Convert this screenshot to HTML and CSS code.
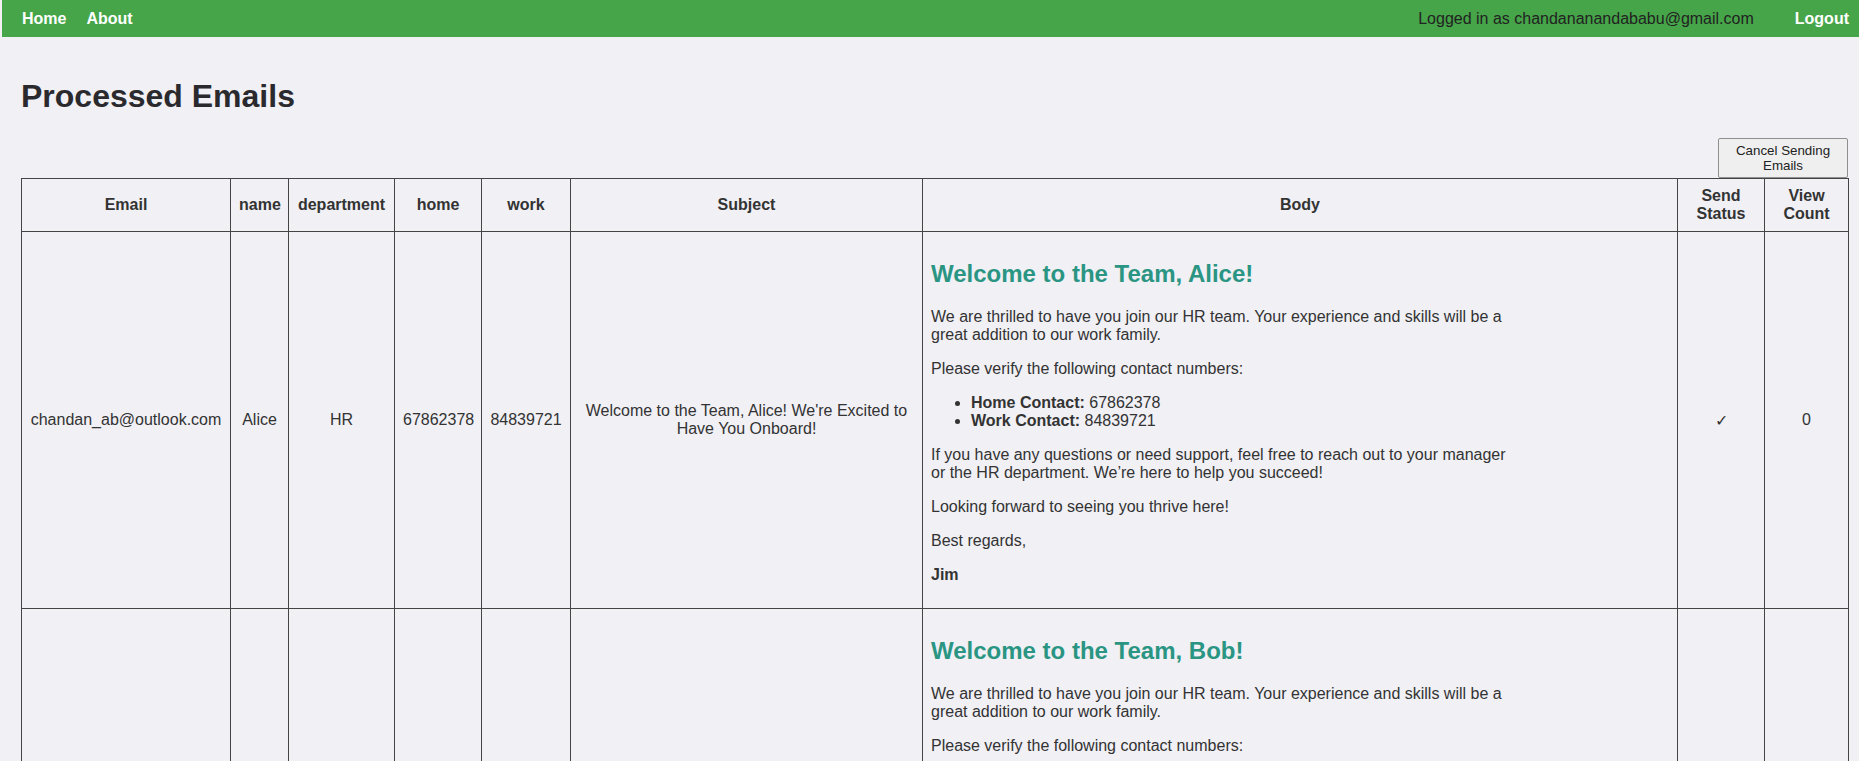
FILE: index.html
```html
<!DOCTYPE html>
<html lang="en">
<head>
<meta charset="utf-8">
<title>Processed Emails</title>
<link rel="stylesheet" href="styles.css">
</head>
<body>
<nav class="topnav">
  <div class="nav-left">
    <a class="nav-link" href="#">Home</a>
    <a class="nav-link" href="#">About</a>
  </div>
  <div class="nav-right">
    <span class="nav-user">Logged in as chandananandababu@gmail.com</span>
    <a class="nav-link" href="#">Logout</a>
  </div>
</nav>
<main class="page">
  <h1 class="title">Processed Emails</h1>
  <div class="actions">
    <button class="cancel-btn" type="button">Cancel Sending Emails</button>
  </div>
  <table class="emails">
    <colgroup>
      <col class="c-email"><col class="c-name"><col class="c-dept"><col class="c-home"><col class="c-work"><col class="c-subject"><col class="c-body"><col class="c-status"><col class="c-count">
    </colgroup>
    <thead>
      <tr>
        <th>Email</th><th>name</th><th>department</th><th>home</th><th>work</th><th>Subject</th><th>Body</th><th>Send Status</th><th>View Count</th>
      </tr>
    </thead>
    <tbody>
      <tr>
        <td>chandan_ab@outlook.com</td>
        <td>Alice</td>
        <td>HR</td>
        <td>67862378</td>
        <td>84839721</td>
        <td>Welcome to the Team, Alice! We're Excited to Have You Onboard!</td>
        <td class="body-cell">
          <div class="mail">
            <h2 class="mail-title">Welcome to the Team, Alice!</h2>
            <p>We are thrilled to have you join our HR team. Your experience and skills will be a great addition to our work family.</p>
            <p>Please verify the following contact numbers:</p>
            <ul class="mail-list">
              <li><strong>Home Contact:</strong> 67862378</li>
              <li><strong>Work Contact:</strong> 84839721</li>
            </ul>
            <p>If you have any questions or need support, feel free to reach out to your manager or the HR department. We’re here to help you succeed!</p>
            <p>Looking forward to seeing you thrive here!</p>
            <p>Best regards,</p>
            <p><strong>Jim</strong></p>
          </div>
        </td>
        <td>✓</td>
        <td>0</td>
      </tr>
      <tr>
        <td>bob_smith@outlook.com</td>
        <td>Bob</td>
        <td>HR</td>
        <td>67862379</td>
        <td>84839722</td>
        <td>Welcome to the Team, Bob! We're Excited to Have You Onboard!</td>
        <td class="body-cell">
          <div class="mail">
            <h2 class="mail-title">Welcome to the Team, Bob!</h2>
            <p>We are thrilled to have you join our HR team. Your experience and skills will be a great addition to our work family.</p>
            <p>Please verify the following contact numbers:</p>
            <ul class="mail-list">
              <li><strong>Home Contact:</strong> 67862379</li>
              <li><strong>Work Contact:</strong> 84839722</li>
            </ul>
            <p>If you have any questions or need support, feel free to reach out to your manager or the HR department. We’re here to help you succeed!</p>
            <p>Looking forward to seeing you thrive here!</p>
            <p>Best regards,</p>
            <p><strong>Jim</strong></p>
          </div>
        </td>
        <td>✓</td>
        <td>0</td>
      </tr>
    </tbody>
  </table>
</main>
</body>
</html>
```
FILE: styles.css
```css
html, body {
  margin: 0;
  padding: 0;
  background: #f0f0f5;
  font-family: "Liberation Sans", Arial, Helvetica, sans-serif;
  color: #333;
}

.topnav {
  margin-left: 2px;
  height: 37px;
  background: #45a548;
  display: flex;
  align-items: center;
  justify-content: space-between;
  padding: 0 10px 0 20px;
  font-size: 16px;
}

.nav-left, .nav-right {
  display: flex;
  align-items: center;
  gap: 20px;
}

.nav-right {
  gap: 41px;
}

.nav-link {
  color: #fff;
  font-weight: bold;
  text-decoration: none;
}

.nav-user {
  color: #222;
}

.page {
  padding: 0 11px 0 21px;
}

.title {
  font-size: 32px;
  font-weight: bold;
  margin: 41px 0 23px;
  color: #2a2a2e;
}

.actions {
  display: flex;
  justify-content: flex-end;
}

.cancel-btn {
  width: 130px;
  height: 40px;
  padding: 4px 6px;
  font-family: "Liberation Sans", Arial, sans-serif;
  font-size: 13.33px;
  line-height: 15px;
  color: #222;
  background: #efefef;
  border: 1px solid #8f8f8f;
  border-radius: 2px;
}

.emails {
  width: 1827px;
  border-collapse: collapse;
  table-layout: fixed;
  font-size: 16px;
}

.c-email { width: 209px; }
.c-name { width: 58px; }
.c-dept { width: 106px; }
.c-home { width: 87px; }
.c-work { width: 89px; }
.c-subject { width: 352px; }
.c-body { width: 755px; }
.c-status { width: 87px; }
.c-count { width: 84px; }

.emails th,
.emails td {
  border: 1px solid #444;
  text-align: center;
  vertical-align: middle;
  padding: 8px;
}

.emails th {
  font-weight: bold;
  color: #333;
}

.emails td.body-cell {
  text-align: left;
}

.mail {
  max-width: 582px;
}

.mail-title {
  margin: 20px 0;
  font-size: 24px;
  font-weight: bold;
  color: #2a9582;
}

.mail p {
  margin: 16px 0;
}

.mail-list {
  margin: 16px 0;
  padding-left: 40px;
}
```
